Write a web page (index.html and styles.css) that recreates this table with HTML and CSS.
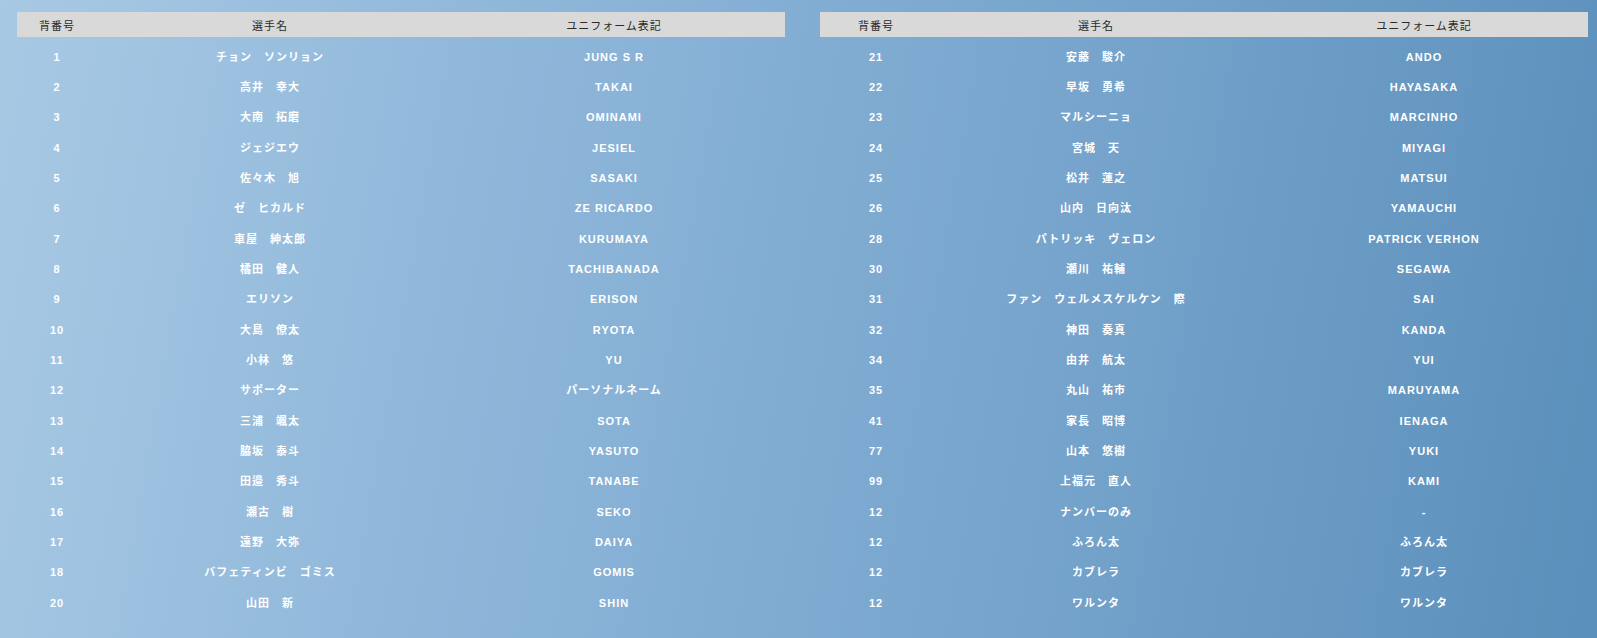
FILE: index.html
```html
<!DOCTYPE html>
<html lang="ja">
<head>
    <meta charset="UTF-8">
    <meta name="viewport" content="width=device-width, initial-scale=1.0">
    <title>背番号一覧</title>
    <link rel="stylesheet" href="styles.css">
</head>
<body>
    <main class="roster">
        <table class="roster-table roster-left">
            <colgroup>
                <col class="col-no">
                <col class="col-name">
                <col class="col-uni">
            </colgroup>
            <thead>
                <tr><th>背番号</th><th>選手名</th><th>ユニフォーム表記</th></tr>
            </thead>
            <tbody>
                <tr><td>1</td><td>チョン　ソンリョン</td><td>JUNG S R</td></tr>
                <tr><td>2</td><td>高井　幸大</td><td>TAKAI</td></tr>
                <tr><td>3</td><td>大南　拓磨</td><td>OMINAMI</td></tr>
                <tr><td>4</td><td>ジェジエウ</td><td>JESIEL</td></tr>
                <tr><td>5</td><td>佐々木　旭</td><td>SASAKI</td></tr>
                <tr><td>6</td><td>ゼ　ヒカルド</td><td>ZE RICARDO</td></tr>
                <tr><td>7</td><td>車屋　紳太郎</td><td>KURUMAYA</td></tr>
                <tr><td>8</td><td>橘田　健人</td><td>TACHIBANADA</td></tr>
                <tr><td>9</td><td>エリソン</td><td>ERISON</td></tr>
                <tr><td>10</td><td>大島　僚太</td><td>RYOTA</td></tr>
                <tr><td>11</td><td>小林　悠</td><td>YU</td></tr>
                <tr><td>12</td><td>サポーター</td><td>パーソナルネーム</td></tr>
                <tr><td>13</td><td>三浦　颯太</td><td>SOTA</td></tr>
                <tr><td>14</td><td>脇坂　泰斗</td><td>YASUTO</td></tr>
                <tr><td>15</td><td>田邉　秀斗</td><td>TANABE</td></tr>
                <tr><td>16</td><td>瀬古　樹</td><td>SEKO</td></tr>
                <tr><td>17</td><td>遠野　大弥</td><td>DAIYA</td></tr>
                <tr><td>18</td><td>バフェティンビ　ゴミス</td><td>GOMIS</td></tr>
                <tr><td>20</td><td>山田　新</td><td>SHIN</td></tr>
            </tbody>
        </table>

        <table class="roster-table roster-right">
            <colgroup>
                <col class="col-no">
                <col class="col-name">
                <col class="col-uni">
            </colgroup>
            <thead>
                <tr><th>背番号</th><th>選手名</th><th>ユニフォーム表記</th></tr>
            </thead>
            <tbody>
                <tr><td>21</td><td>安藤　駿介</td><td>ANDO</td></tr>
                <tr><td>22</td><td>早坂　勇希</td><td>HAYASAKA</td></tr>
                <tr><td>23</td><td>マルシーニョ</td><td>MARCINHO</td></tr>
                <tr><td>24</td><td>宮城　天</td><td>MIYAGI</td></tr>
                <tr><td>25</td><td>松井　蓮之</td><td>MATSUI</td></tr>
                <tr><td>26</td><td>山内　日向汰</td><td>YAMAUCHI</td></tr>
                <tr><td>28</td><td>パトリッキ　ヴェロン</td><td>PATRICK VERHON</td></tr>
                <tr><td>30</td><td>瀬川　祐輔</td><td>SEGAWA</td></tr>
                <tr><td>31</td><td>ファン　ウェルメスケルケン　際</td><td>SAI</td></tr>
                <tr><td>32</td><td>神田　奏真</td><td>KANDA</td></tr>
                <tr><td>34</td><td>由井　航太</td><td>YUI</td></tr>
                <tr><td>35</td><td>丸山　祐市</td><td>MARUYAMA</td></tr>
                <tr><td>41</td><td>家長　昭博</td><td>IENAGA</td></tr>
                <tr><td>77</td><td>山本　悠樹</td><td>YUKI</td></tr>
                <tr><td>99</td><td>上福元　直人</td><td>KAMI</td></tr>
                <tr><td>12</td><td>ナンバーのみ</td><td>-</td></tr>
                <tr><td>12</td><td>ふろん太</td><td>ふろん太</td></tr>
                <tr><td>12</td><td>カブレラ</td><td>カブレラ</td></tr>
                <tr><td>12</td><td>ワルンタ</td><td>ワルンタ</td></tr>
            </tbody>
        </table>
    </main>
</body>
</html>
```

FILE: styles.css
```css
:root {
    --color-cabecera: #d9d9d9;
    --color-texto-cabecera: #2a2a2a;
    --color-texto: #ffffff;
}
html, body {
    height: 100%;
}
body {
    margin: 0;
    font-family: 'Liberation Sans', 'Noto Sans CJK JP', sans-serif;
    background: linear-gradient(100deg, #a8c9e4 0%, #8fb7da 30%, #76a4cc 65%, #5a8fbb 100%);
    color: var(--color-texto);
}
.roster {
    display: flex;
    gap: 35px;
    padding: 12px 9px 0 17px;
}
.roster-table {
    width: 768px;
    flex: 0 0 768px;
    border-collapse: collapse;
    table-layout: fixed;
}
.roster-left .col-no { width: 80px; }
.roster-left .col-name { width: 346px; }
.roster-left .col-uni { width: 342px; }
.roster-right .col-no { width: 112px; }
.roster-right .col-name { width: 328px; }
.roster-right .col-uni { width: 328px; }

.roster-table th {
    height: 25px;
    padding: 0;
    background-color: var(--color-cabecera);
    color: var(--color-texto-cabecera);
    font-family: 'Noto Sans CJK JP', sans-serif;
    font-weight: 400;
    font-size: 11px;
    letter-spacing: 1px;
    text-align: center;
    vertical-align: middle;
}
.roster-table td {
    height: 30.33px;
    padding: 0;
    font-size: 11px;
    font-weight: 700;
    letter-spacing: 1px;
    text-align: center;
    vertical-align: middle;
    line-height: 1;
}
.roster-table tbody tr:first-child td {
    height: 35.5px;
    padding-top: 5.2px;
    box-sizing: border-box;
}
```
